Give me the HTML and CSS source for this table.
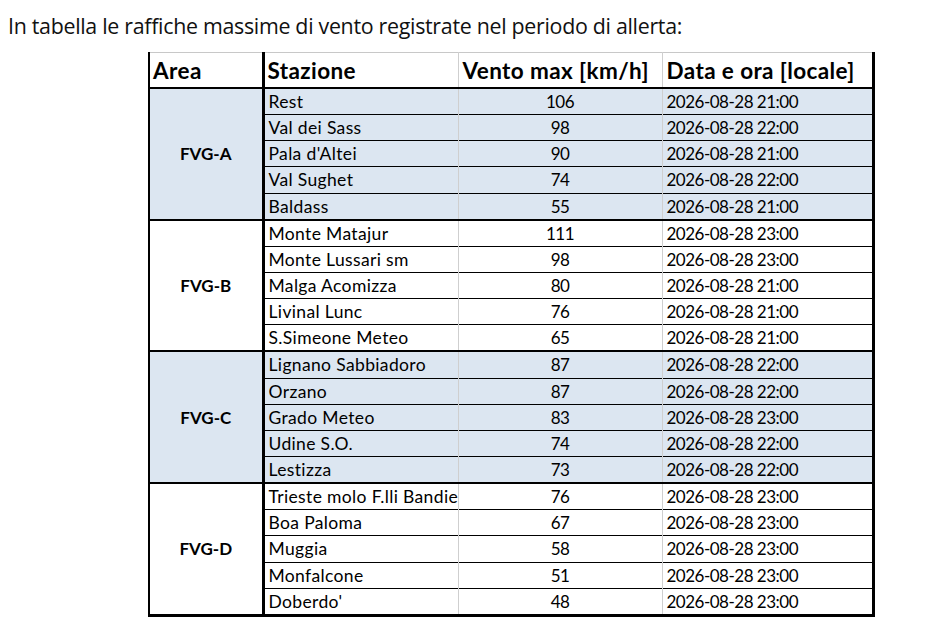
FILE: index.html
```html
<!DOCTYPE html>
<html lang="it">
<head>
<meta charset="utf-8">
<title>Raffiche massime</title>
<link rel="stylesheet" href="styles.css">
</head>
<body>
<p class="intro">In tabella le raffiche massime di vento registrate nel periodo di allerta:</p>
<table class="wind">
  <colgroup>
    <col class="c-area"><col class="c-st"><col class="c-v"><col class="c-d">
  </colgroup>
  <thead>
    <tr><th class="area">Area</th><th class="st">Stazione</th><th class="v">Vento max [km/h]</th><th class="d">Data e ora [locale]</th></tr>
  </thead>
  <tbody class="grp shade">
    <tr><td class="area" rowspan="5">FVG-A</td><td class="st">Rest</td><td class="v">106</td><td class="d">2026-08-28 21:00</td></tr>
    <tr><td class="st">Val dei Sass</td><td class="v">98</td><td class="d">2026-08-28 22:00</td></tr>
    <tr><td class="st">Pala d'Altei</td><td class="v">90</td><td class="d">2026-08-28 21:00</td></tr>
    <tr><td class="st">Val Sughet</td><td class="v">74</td><td class="d">2026-08-28 22:00</td></tr>
    <tr><td class="st">Baldass</td><td class="v">55</td><td class="d">2026-08-28 21:00</td></tr>
  </tbody>
  <tbody class="grp">
    <tr><td class="area" rowspan="5">FVG-B</td><td class="st">Monte Matajur</td><td class="v">111</td><td class="d">2026-08-28 23:00</td></tr>
    <tr><td class="st">Monte Lussari sm</td><td class="v">98</td><td class="d">2026-08-28 23:00</td></tr>
    <tr><td class="st">Malga Acomizza</td><td class="v">80</td><td class="d">2026-08-28 21:00</td></tr>
    <tr><td class="st">Livinal Lunc</td><td class="v">76</td><td class="d">2026-08-28 21:00</td></tr>
    <tr><td class="st">S.Simeone Meteo</td><td class="v">65</td><td class="d">2026-08-28 21:00</td></tr>
  </tbody>
  <tbody class="grp shade">
    <tr><td class="area" rowspan="5">FVG-C</td><td class="st">Lignano Sabbiadoro</td><td class="v">87</td><td class="d">2026-08-28 22:00</td></tr>
    <tr><td class="st">Orzano</td><td class="v">87</td><td class="d">2026-08-28 22:00</td></tr>
    <tr><td class="st">Grado Meteo</td><td class="v">83</td><td class="d">2026-08-28 23:00</td></tr>
    <tr><td class="st">Udine S.O.</td><td class="v">74</td><td class="d">2026-08-28 22:00</td></tr>
    <tr><td class="st">Lestizza</td><td class="v">73</td><td class="d">2026-08-28 22:00</td></tr>
  </tbody>
  <tbody class="grp">
    <tr><td class="area" rowspan="5">FVG-D</td><td class="st">Trieste molo F.lli Bandiera</td><td class="v">76</td><td class="d">2026-08-28 23:00</td></tr>
    <tr><td class="st">Boa Paloma</td><td class="v">67</td><td class="d">2026-08-28 23:00</td></tr>
    <tr><td class="st">Muggia</td><td class="v">58</td><td class="d">2026-08-28 23:00</td></tr>
    <tr><td class="st">Monfalcone</td><td class="v">51</td><td class="d">2026-08-28 23:00</td></tr>
    <tr><td class="st">Doberdo'</td><td class="v">48</td><td class="d">2026-08-28 23:00</td></tr>
  </tbody>
</table>
</body>
</html>
```
FILE: styles.css
```css
html, body {
  margin: 0;
  padding: 0;
  background: #ffffff;
}
body {
  padding: 0 8px;
  color: #000;
}
.intro {
  margin: 0;
  padding-top: 11px;
  height: 52px;
  box-sizing: border-box;
  font-family: "Open Sans", sans-serif;
  font-size: 21.4px;
  line-height: 30px;
  letter-spacing: -0.3px;
  color: #111;
}
.wind {
  margin-left: 140px;
  border-collapse: collapse;
  table-layout: fixed;
  width: 724px;
  font-family: Lato, "Liberation Sans", sans-serif;
  font-size: 17px;
  border-top: 1px solid #c8c8c8;
  border-left: 2px solid #000;
  border-right: 3px solid #000;
  border-bottom: 3px solid #000;
}
.c-area { width: 114px; }
.c-st { width: 195px; }
.c-v { width: 204px; }
.c-d { width: 211px; }
.wind th {
  height: 34px;
  font-size: 22.5px;
  letter-spacing: 0.4px;
  font-weight: bold;
  text-align: left;
  padding: 0 3px;
  border-bottom: 2px solid #000;
  white-space: nowrap;
  overflow: hidden;
}
.wind td {
  height: 25.15px;
  padding: 0 4px;
  white-space: nowrap;
  overflow: hidden;
  border-top: 1px solid #000;
}
.wind .area {
  border-right: 3px solid #000;
}
.wind td.area {
  text-align: center;
  font-weight: bold;
}
.wind td.st {
  font-size: 17.5px;
  letter-spacing: 0.35px;
}
.wind td.v, .wind td.d {
  letter-spacing: -0.5px;
}
.wind th.v, .wind th.d { padding-left: 4px; }
.wind td.v { text-align: center; }
.wind .st { border-right: 1px solid #cfcfcf; }
.wind .v { border-right: 1px solid #cfcfcf; }
.grp tr:first-child td {
  border-top: 2px solid #000;
}
.shade td {
  background: #dce6f1;
}
```
